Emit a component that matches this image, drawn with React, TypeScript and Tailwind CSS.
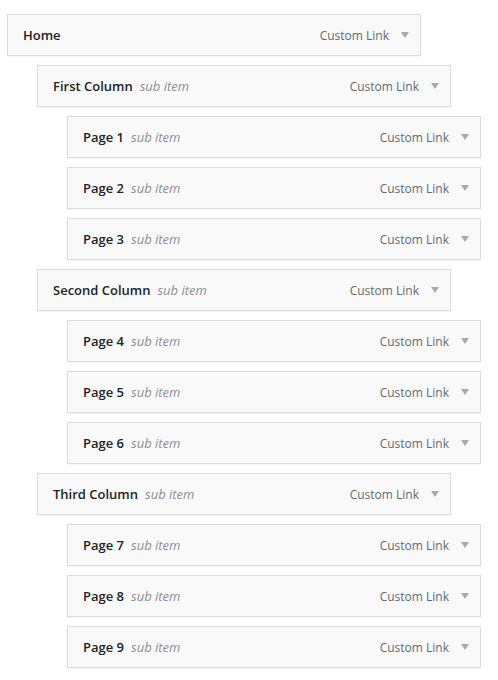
import React from 'react';

type Item = { title: string; depth: number; sub?: boolean };

const items: Item[] = [
  { title: 'Home', depth: 0 },
  { title: 'First Column', depth: 1, sub: true },
  { title: 'Page 1', depth: 2, sub: true },
  { title: 'Page 2', depth: 2, sub: true },
  { title: 'Page 3', depth: 2, sub: true },
  { title: 'Second Column', depth: 1, sub: true },
  { title: 'Page 4', depth: 2, sub: true },
  { title: 'Page 5', depth: 2, sub: true },
  { title: 'Page 6', depth: 2, sub: true },
  { title: 'Third Column', depth: 1, sub: true },
  { title: 'Page 7', depth: 2, sub: true },
  { title: 'Page 8', depth: 2, sub: true },
  { title: 'Page 9', depth: 2, sub: true },
];

const indent = ['ml-0', 'ml-[30px]', 'ml-[60px]'];

const MenuItem = ({ item }: { item: Item }) => (
  <div
    className={`${indent[item.depth]} w-[414px] h-[42px] flex items-center justify-between border border-[#dcdcde] bg-[#f9f9f9] shadow-[0_1px_1px_rgba(0,0,0,0.04)] pl-[15px] pr-[10px]`}
  >
    <div className="flex items-center">
      <span className="font-semibold text-[#1d2327]">{item.title}</span>
      {item.sub && <span className="italic text-[#8c8f94] ml-[7px]">sub item</span>}
    </div>
    <div className="flex items-center">
      <span className="text-[12px] text-[#646970] translate-y-[1px]">Custom Link</span>
      {/* dropdown arrow */}
      <svg width="8" height="6" viewBox="0 0 8 6" className="ml-[12px] mr-[1px]">
        <path d="M0 0h8L4 6z" fill="#a7aaad" />
      </svg>
    </div>
  </div>
);

export default function App() {
  return (
    <div
      className="min-h-screen bg-white pt-[14px] pl-[7px] text-[13px] leading-[20px]"
      style={{ fontFamily: '"Open Sans", sans-serif' }}
    >
      <div className="flex flex-col gap-[9px]">
        {items.map((item) => (
          <MenuItem key={item.title} item={item} />
        ))}
      </div>
    </div>
  );
}
